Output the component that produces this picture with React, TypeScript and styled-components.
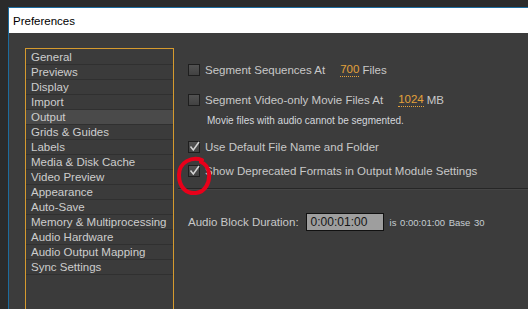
import React from 'react';
import styled, { createGlobalStyle } from 'styled-components';

const GlobalStyle = createGlobalStyle`
  html, body {
    margin: 0;
    padding: 0;
    height: 100%;
    overflow: hidden;
    background: #2b2b2b;
  }
  #root {
    height: 100%;
  }
`;

const Desktop = styled.div`
  height: 100%;
  box-sizing: border-box;
  padding: 7px 0 0 8px;
  font-family: 'Liberation Sans', Arial, sans-serif;
`;

const Window = styled.div`
  height: 100%;
  display: flex;
  flex-direction: column;
  border-top: 1px solid #1d6c9e;
  border-left: 1px solid #1d6c9e;
  background: #3c3c3c;
`;

const TitleBar = styled.div`
  height: 25px;
  flex: none;
  display: flex;
  align-items: center;
  padding-left: 4px;
  background: #ffffff;
  color: #000;
  font-size: 11.5px;
`;

const Body = styled.div`
  flex: 1;
  min-height: 0;
  display: flex;
  align-items: stretch;
  padding: 15px 0 0 16px;
`;

const CategoryList = styled.ul`
  list-style: none;
  margin: 0;
  padding: 1px 0 0;
  width: 147px;
  flex: none;
  border: 1px solid #d59a2e;
  border-bottom: none;
  background: #3b3b3b;
`;

const Category = styled.li<{ $active?: boolean }>`
  height: 14px;
  line-height: 14px;
  padding-left: 5px;
  border-bottom: 1px solid #303030;
  font-size: 11.5px;
  color: #cdcdcd;
  white-space: nowrap;
  background: ${p => (p.$active ? '#4a4a4a' : 'transparent')};
`;

const Settings = styled.div`
  flex: 1;
  display: flex;
  flex-direction: column;
  padding-left: 14px;
  color: #c8c8c8;
  font-size: 11.5px;
`;

const Row = styled.div<{ $mt: number }>`
  display: flex;
  align-items: center;
  height: 16px;
  margin-top: ${p => p.$mt}px;
  white-space: nowrap;
`;

const BoxWrap = styled.span`
  position: relative;
  display: inline-flex;
  margin-right: 5px;
`;

const Box = styled.span`
  position: relative;
  width: 12px;
  height: 12px;
  box-sizing: border-box;
  border: 1px solid #1e1e1e;
  background: linear-gradient(#525252, #424242);
`;

const Tick = styled.svg`
  position: absolute;
  left: 0;
  top: -1px;
  overflow: visible;
`;

const Value = styled.span<{ $ml: number }>`
  margin-left: ${p => p.$ml}px;
  margin-right: 3px;
  color: #e3a13a;
  border-bottom: 1px dotted #e3a13a;
  line-height: 13px;
`;

const Note = styled.div`
  margin: 6px 0 0 19px;
  height: 14px;
  line-height: 14px;
  font-size: 10px;
  color: #d4d8dc;
`;

const Divider = styled.div`
  margin: 9px 0 0 -10px;
  height: 1px;
  background: #262626;
  border-bottom: 1px solid #454545;
`;

const DurationRow = styled.div`
  display: flex;
  align-items: center;
  height: 20px;
  margin-top: 22px;
  white-space: nowrap;
`;

const TimeField = styled.div`
  margin-left: 7px;
  width: 78px;
  height: 18px;
  box-sizing: border-box;
  border: 1px solid #111;
  background: #9e9e9e;
  color: #151515;
  font-size: 12px;
  line-height: 16px;
  padding-left: 4px;
`;

const TimeInfo = styled.span`
  margin-left: 6px;
  font-size: 9.5px;
  color: #c5ccd2;
  word-spacing: 1px;
`;

const Annotation = styled.svg`
  position: absolute;
  left: -12px;
  top: -9px;
  pointer-events: none;
`;

const Check: React.FC<{ checked?: boolean; circled?: boolean }> = ({ checked, circled }) => (
  <BoxWrap>
    <Box>
      {checked && (
        <Tick width="11" height="11" viewBox="0 0 11 11">
          <path d="M1.5 5.5 L4.3 9 L10 1" fill="none" stroke="#d4d4d4" strokeWidth="1.5" />
        </Tick>
      )}
    </Box>
    {circled && (
      <Annotation width="37" height="40" viewBox="0 0 37 40">
        <path
          d="M26 4 C16 0 3 6 3 19 C3 32 11 38 20 37 C29 36 34 27 33 17 C32 11 30 8 25 6"
          fill="none"
          stroke="#e8001a"
          strokeWidth="4"
          strokeLinecap="round"
        />
      </Annotation>
    )}
  </BoxWrap>
);

const categories = [
  'General',
  'Previews',
  'Display',
  'Import',
  'Output',
  'Grids & Guides',
  'Labels',
  'Media & Disk Cache',
  'Video Preview',
  'Appearance',
  'Auto-Save',
  'Memory & Multiprocessing',
  'Audio Hardware',
  'Audio Output Mapping',
  'Sync Settings',
];

const App: React.FC = () => {
  return (
    <>
      <GlobalStyle />
      <Desktop>
        <Window>
          <TitleBar>Preferences</TitleBar>
          <Body>
            <CategoryList>
              {categories.map(c => (
                <Category key={c} $active={c === 'Output'}>
                  {c}
                </Category>
              ))}
            </CategoryList>
            <Settings>
              <Row $mt={14}>
                <Check />
                Segment Sequences At
                <Value $ml={15}>700</Value>
                Files
              </Row>
              <Row $mt={14}>
                <Check />
                Segment Video-only Movie Files At
                <Value $ml={15}>1024</Value>
                MB
              </Row>
              <Note>Movie files with audio cannot be segmented.</Note>
              <Row $mt={11}>
                <Check checked />
                Use Default File Name and Folder
              </Row>
              <Row $mt={8}>
                <Check checked circled />
                Show Deprecated Formats in Output Module Settings
              </Row>
              <Divider />
              <DurationRow>
                Audio Block Duration:
                <TimeField>0:00:01:00</TimeField>
                <TimeInfo>is 0:00:01:00 Base 30</TimeInfo>
              </DurationRow>
            </Settings>
          </Body>
        </Window>
      </Desktop>
    </>
  );
};

export default App;
